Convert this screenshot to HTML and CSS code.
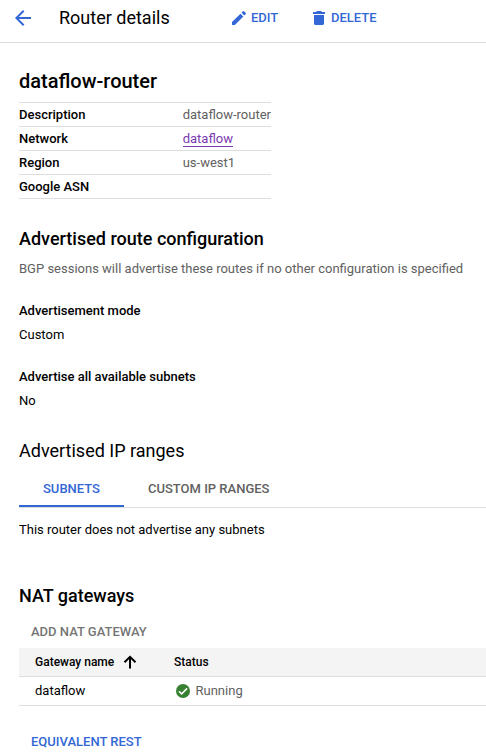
FILE: index.html
```html
<!DOCTYPE html>
<html lang="en">
<head>
<meta charset="utf-8">
<title>Router details</title>
<link rel="stylesheet" href="styles.css">
</head>
<body>
<header class="topbar">
  <svg class="back" viewBox="0 0 24 24"><path d="M20 11H7.83l5.59-5.59L12 4l-8 8 8 8 1.41-1.41L7.83 13H20v-2z"/></svg>
  <h1 class="page-title">Router details</h1>
  <button class="action edit"><svg viewBox="0 0 18 18"><path d="M2 13.12l8.49-8.488 2.878 2.878L4.878 16H2v-2.88zm13.776-8.017L14.37 6.507 11.493 3.63l1.404-1.406a.764.764 0 0 1 1.082 0l1.796 1.796a.764.764 0 0 1 0 1.082z"/></svg><span>EDIT</span></button>
  <button class="action delete"><svg viewBox="0 0 18 18"><path d="M4 14.5c0 .83.67 1.5 1.5 1.5h7c.83 0 1.5-.67 1.5-1.5V6H4v8.5zM15 3h-3l-1-1H7L6 3H3v2h12V3z"/></svg><span>DELETE</span></button>
</header>
<main class="content">
  <h2 class="name">dataflow-router</h2>
  <table class="details">
    <tr><th>Description</th><td><span class="value">dataflow-router</span></td></tr>
    <tr><th>Network</th><td><a class="link" href="#">dataflow</a></td></tr>
    <tr><th>Region</th><td><span class="value">us-west1</span></td></tr>
    <tr><th>Google ASN</th><td></td></tr>
  </table>
  <h3 class="section-title">Advertised route configuration</h3>
  <p class="hint">BGP sessions will advertise these routes if no other configuration is specified</p>
  <dl class="fields">
    <div class="field"><dt>Advertisement mode</dt><dd>Custom</dd></div>
    <div class="field"><dt>Advertise all available subnets</dt><dd>No</dd></div>
  </dl>
  <h3 class="section-title ranges">Advertised IP ranges</h3>
  <nav class="tabs">
    <a class="tab active">SUBNETS</a>
    <a class="tab">CUSTOM IP RANGES</a>
  </nav>
  <p class="empty">This router does not advertise any subnets</p>
  <h3 class="section-title nat">NAT gateways</h3>
  <button class="text-button add">ADD NAT GATEWAY</button>
  <div class="grid">
    <div class="row head">
      <div class="cell"><span>Gateway name</span><svg class="sort" viewBox="0 0 14 14"><path d="M7 13.5V2M1.500 7.300L7 1.800 12.500 7.300"/></svg></div>
      <div class="cell">Status</div>
    </div>
    <div class="row">
      <div class="cell">dataflow</div>
      <div class="cell"><svg class="ok" viewBox="0 0 14 14"><circle cx="7" cy="7" r="7"/><path d="M2.900 7.200l2.700 2.700 5.500-5.500"/></svg><span class="running">Running</span></div>
    </div>
  </div>
  <button class="text-button rest">EQUIVALENT REST</button>
</main>
</body>
</html>
```
FILE: styles.css
```css
* { box-sizing: border-box; }
body {
  margin: 0;
  background: #fff;
  color: #000;
  font: 400 13px/24px Roboto, sans-serif;
  overflow: hidden;
}
h1, h2, h3, p, dl, dd { margin: 0; }
button {
  border: 0;
  padding: 0;
  background: none;
  font: 500 13px/24px Roboto, sans-serif;
}
.topbar {
  display: flex;
  align-items: center;
  height: 43px;
  padding: 0 0 7px 11px;
  border-bottom: 1px solid #dedede;
}
.back { width: 24px; height: 24px; margin-top: 1px; fill: #3367d6; }
.page-title { width: 172px; margin-left: 24px; font-size: 18px; font-weight: 400; }
.action { display: flex; align-items: center; color: #3367d6; }
.action svg { width: 18px; height: 18px; margin: 1px 3px 0 0; fill: currentColor; }
.edit { width: 80px; margin-left: -1px; }
.content { padding: 26px 0 0 19px; }
.name { font-size: 20px; font-weight: 500; }
.details { width: 252px; margin-top: 9px; border-collapse: separate; border-spacing: 0; }
.details th, .details td {
  height: 24px;
  padding: 1px 0 0;
  border-bottom: 1px solid #dedede;
  line-height: 22px;
  text-align: left;
  white-space: nowrap;
}
.details tr:first-child > * { height: 25px; border-top: 1px solid #dedede; }
.details th { width: 164px; font-weight: 500; }
.value, .hint, .running { color: #616161; }
.link {
  display: inline-block;
  height: 17px;
  border-bottom: 1px solid #7b3ab0;
  color: #7b3ab0;
  line-height: 18px;
  text-decoration: none;
  vertical-align: top;
  margin-top: 2px;
}
.section-title { margin-top: 28px; font-size: 18px; font-weight: 500; line-height: 24px; }
.hint { margin-top: 6px; white-space: nowrap; }
.field { margin-top: 18px; }
dt { font-weight: 500; }
.ranges { margin-top: 26px; font-weight: 400; }
.tabs { display: flex; height: 45px; border-bottom: 1px solid #dedede; }
.tab { height: 44px; padding: 14px 24px 0; color: #616161; font-weight: 500; line-height: 24px; }
.active { width: 105px; border-bottom: 2px solid #3367d6; color: #3367d6; }
.empty { margin-top: 10px; }
.nat { margin-top: 42px; }
.text-button { display: block; margin-left: 12px; color: #3367d6; }
.add { margin-top: 12px; color: #757575; }
.grid { margin-top: 4px; }
.row {
  display: grid;
  grid-template-columns: 139px 1fr;
  height: 29px;
  padding-left: 16px;
  border-bottom: 1px solid #dedede;
}
.head { background: #f4f4f4; font-size: 12px; font-weight: 500; }
.cell { display: flex; align-items: center; }
.sort { width: 14px; height: 14px; margin-left: 9px; fill: none; stroke: #000; stroke-width: 2; }
.ok { width: 14px; height: 14px; margin: 0 5.5px 0 2px; fill: #388032; }
.ok path { fill: none; stroke: #fff; stroke-width: 1.5; }
.rest { margin-top: 24px; }
```
